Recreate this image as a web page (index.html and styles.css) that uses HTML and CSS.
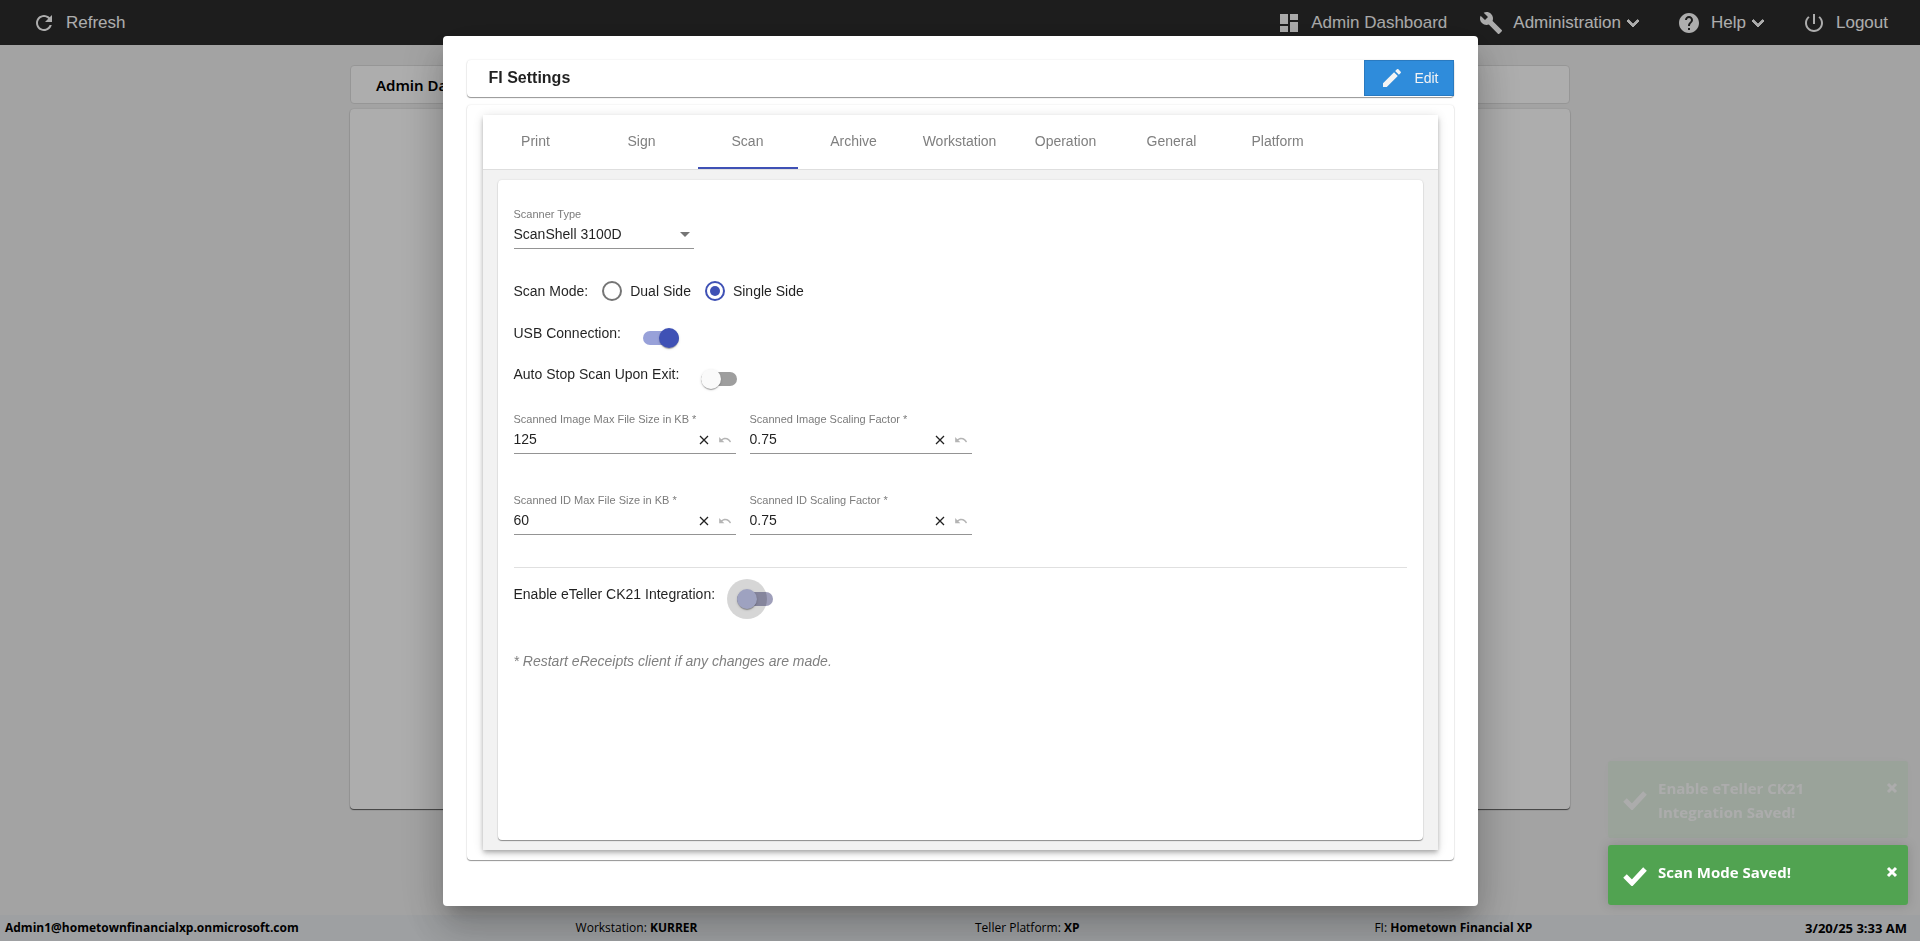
FILE: index.html
```html
<!DOCTYPE html>
<html lang="en">
<head>
    <meta charset="UTF-8">
    <meta name="viewport" content="width=device-width, initial-scale=1.0">
    <title>FI Settings</title>
    <link rel="stylesheet" href="styles.css">
</head>
<body>
    <header class="main-header">
        <a class="nav-link" href="#">
            <svg class="icon" viewBox="0 0 24 24"><path d="M17.65 6.35C16.2 4.9 14.21 4 12 4c-4.42 0-7.99 3.58-7.99 8s3.57 8 7.99 8c3.73 0 6.84-2.55 7.73-6h-2.08c-.82 2.33-3.04 4-5.65 4-3.31 0-6-2.69-6-6s2.69-6 6-6c1.66 0 3.14.69 4.22 1.78L13 11h7V4l-2.35 2.35z"/></svg>
            Refresh
        </a>
        <nav class="nav">
            <a class="nav-link" href="#">
                <svg class="icon" viewBox="0 0 24 24"><path d="M3 13h8V3H3v10zm0 8h8v-6H3v6zm10 0h8V11h-8v10zm0-18v6h8V3h-8z"/></svg>
                Admin Dashboard
            </a>
            <button class="nav-link" type="button">
                <svg class="icon" viewBox="0 0 24 24"><path d="M22.7 19l-9.1-9.1c.9-2.3.4-5-1.5-6.9-2-2-5-2.4-7.4-1.3L9 6 6 9 1.6 4.7C.4 7.1.9 10.1 2.9 12.1c1.9 1.9 4.6 2.4 6.9 1.5l9.1 9.1c.4.4 1 .4 1.4 0l2.3-2.3c.5-.4.5-1.1.1-1.4z"/></svg>
                <span class="with-arrow">Administration<svg class="icon" viewBox="0 0 24 24"><path d="M16.59 8.59L12 13.17 7.41 8.59 6 10l6 6 6-6z"/></svg></span>
            </button>
            <button class="nav-link" type="button">
                <svg class="icon" viewBox="0 0 24 24"><path d="M12 2C6.48 2 2 6.48 2 12s4.48 10 10 10 10-4.48 10-10S17.52 2 12 2zm1 17h-2v-2h2v2zm2.07-7.75l-.9.92C13.45 12.9 13 13.5 13 15h-2v-.5c0-1.1.45-2.1 1.17-2.83l1.24-1.26c.37-.36.59-.86.59-1.41 0-1.1-.9-2-2-2s-2 .9-2 2H8c0-2.21 1.79-4 4-4s4 1.79 4 4c0 .88-.36 1.68-.93 2.25z"/></svg>
                <span class="with-arrow">Help<svg class="icon" viewBox="0 0 24 24"><path d="M16.59 8.59L12 13.17 7.41 8.59 6 10l6 6 6-6z"/></svg></span>
            </button>
            <a class="nav-link" href="#">
                <svg class="icon" viewBox="0 0 24 24"><path d="M13 3h-2v10h2V3zm4.83 2.17l-1.42 1.42C17.99 7.86 19 9.81 19 12c0 3.87-3.13 7-7 7s-7-3.13-7-7c0-2.19 1.01-4.14 2.58-5.42L6.17 5.17C4.23 6.82 3 9.26 3 12c0 4.97 4.03 9 9 9s9-4.03 9-9c0-2.74-1.23-5.18-3.17-6.83z"/></svg>
                Logout
            </a>
        </nav>
    </header>

    <main class="page">
        <h1 class="page-title">Admin Dashboard</h1>
        <div class="page-card"></div>
    </main>

    <footer class="status-bar">
        <b>Admin1@hometownfinancialxp.onmicrosoft.com</b>
        <span>Workstation: <b>KURRER</b></span>
        <span>Teller Platform: <b>XP</b></span>
        <span>FI: <b>Hometown Financial XP</b></span>
        <b class="clock">3/20/25 3:33 AM</b>
    </footer>

    <!-- Settings dialog -->
    <div class="overlay">
        <section class="dialog" role="dialog" aria-labelledby="dialog-title">
            <div class="dialog-header">
                <h2 id="dialog-title">FI Settings</h2>
                <button class="edit-button" type="button">
                    <svg class="icon" viewBox="0 0 24 24"><path d="M3 17.25V21h3.75L17.81 9.94l-3.75-3.75L3 17.25zM20.71 7.04c.39-.39.39-1.02 0-1.41l-2.34-2.34c-.39-.39-1.02-.39-1.41 0l-1.83 1.83 3.75 3.75 1.83-1.83z"/></svg>
                    Edit
                </button>
            </div>

            <div class="dialog-body">
                <div class="tab-card">
                    <div class="tabs" role="tablist">
                        <button class="tab" type="button" role="tab">Print</button>
                        <button class="tab" type="button" role="tab">Sign</button>
                        <button class="tab active" type="button" role="tab" aria-selected="true">Scan</button>
                        <button class="tab" type="button" role="tab">Archive</button>
                        <button class="tab" type="button" role="tab">Workstation</button>
                        <button class="tab" type="button" role="tab">Operation</button>
                        <button class="tab" type="button" role="tab">General</button>
                        <button class="tab" type="button" role="tab">Platform</button>
                    </div>

                    <form class="panel">
                        <div class="field field-select">
                            <label for="scanner-type">Scanner Type</label>
                            <div class="control">
                                <select id="scanner-type">
                                    <option>ScanShell 3100D</option>
                                </select>
                            </div>
                        </div>

                        <div class="radio-row" role="radiogroup" aria-labelledby="scan-mode">
                            <span id="scan-mode">Scan Mode:</span>
                            <label><input type="radio" name="mode"> Dual Side</label>
                            <label><input type="radio" name="mode" checked> Single Side</label>
                        </div>

                        <div class="toggle-row usb">
                            <label for="usb">USB Connection:</label>
                            <input class="toggle" id="usb" type="checkbox" checked>
                        </div>
                        <div class="toggle-row">
                            <label for="auto-stop">Auto Stop Scan Upon Exit:</label>
                            <input class="toggle" id="auto-stop" type="checkbox">
                        </div>

                        <div class="fields">
                            <div class="field">
                                <label for="image-size">Scanned Image Max File Size in KB *</label>
                                <div class="control">
                                    <input id="image-size" type="text" value="125">
                                    <button type="button" aria-label="Clear"><svg class="clear" viewBox="0 0 16 16"><path d="M4 4l8 8M12 4l-8 8"/></svg></button>
                                    <button type="button" aria-label="Undo"><svg class="undo" viewBox="0 0 24 24"><path d="M12.5 8c-2.65 0-5.05.99-6.9 2.6L2 7v9h9l-3.62-3.62c1.39-1.16 3.16-1.88 5.12-1.88 3.54 0 6.55 2.31 7.6 5.5l2.37-.78C21.08 11.03 17.15 8 12.5 8z"/></svg></button>
                                </div>
                            </div>
                            <div class="field">
                                <label for="image-scale">Scanned Image Scaling Factor *</label>
                                <div class="control">
                                    <input id="image-scale" type="text" value="0.75">
                                    <button type="button" aria-label="Clear"><svg class="clear" viewBox="0 0 16 16"><path d="M4 4l8 8M12 4l-8 8"/></svg></button>
                                    <button type="button" aria-label="Undo"><svg class="undo" viewBox="0 0 24 24"><path d="M12.5 8c-2.65 0-5.05.99-6.9 2.6L2 7v9h9l-3.62-3.62c1.39-1.16 3.16-1.88 5.12-1.88 3.54 0 6.55 2.31 7.6 5.5l2.37-.78C21.08 11.03 17.15 8 12.5 8z"/></svg></button>
                                </div>
                            </div>
                            <div class="field">
                                <label for="id-size">Scanned ID Max File Size in KB *</label>
                                <div class="control">
                                    <input id="id-size" type="text" value="60">
                                    <button type="button" aria-label="Clear"><svg class="clear" viewBox="0 0 16 16"><path d="M4 4l8 8M12 4l-8 8"/></svg></button>
                                    <button type="button" aria-label="Undo"><svg class="undo" viewBox="0 0 24 24"><path d="M12.5 8c-2.65 0-5.05.99-6.9 2.6L2 7v9h9l-3.62-3.62c1.39-1.16 3.16-1.88 5.12-1.88 3.54 0 6.55 2.31 7.6 5.5l2.37-.78C21.08 11.03 17.15 8 12.5 8z"/></svg></button>
                                </div>
                            </div>
                            <div class="field">
                                <label for="id-scale">Scanned ID Scaling Factor *</label>
                                <div class="control">
                                    <input id="id-scale" type="text" value="0.75">
                                    <button type="button" aria-label="Clear"><svg class="clear" viewBox="0 0 16 16"><path d="M4 4l8 8M12 4l-8 8"/></svg></button>
                                    <button type="button" aria-label="Undo"><svg class="undo" viewBox="0 0 24 24"><path d="M12.5 8c-2.65 0-5.05.99-6.9 2.6L2 7v9h9l-3.62-3.62c1.39-1.16 3.16-1.88 5.12-1.88 3.54 0 6.55 2.31 7.6 5.5l2.37-.78C21.08 11.03 17.15 8 12.5 8z"/></svg></button>
                                </div>
                            </div>
                        </div>

                        <hr>

                        <div class="toggle-row">
                            <label for="ck21">Enable eTeller CK21 Integration:</label>
                            <input class="toggle pressed" id="ck21" type="checkbox">
                        </div>

                        <p class="note">* Restart eReceipts client if any changes are made.</p>
                    </form>
                </div>
            </div>
        </section>
    </div>

    <!-- Notifications -->
    <div class="toasts">
        <div class="toast fading">
            <svg class="check" viewBox="0 0 24 20"><path d="M2 10l7 7L22 3" /></svg>
            <p>Enable eTeller CK21 Integration Saved!</p>
            <button type="button" aria-label="Close"><svg viewBox="0 0 12 12"><path d="M2 2l8 8M10 2l-8 8"/></svg></button>
        </div>
        <div class="toast">
            <svg class="check" viewBox="0 0 24 20"><path d="M2 10l7 7L22 3" /></svg>
            <p>Scan Mode Saved!</p>
            <button type="button" aria-label="Close"><svg viewBox="0 0 12 12"><path d="M2 2l8 8M10 2l-8 8"/></svg></button>
        </div>
    </div>
</body>
</html>
```

FILE: styles.css
```css
* {
    box-sizing: border-box;
    margin: 0;
    padding: 0;
}

body {
    display: flex;
    flex-direction: column;
    min-height: 100vh;
    background: #f1f1f1;
    color: rgba(0, 0, 0, 0.87);
    font-family: Arial, "Liberation Sans", sans-serif;
    font-size: 14px;
    line-height: 20px;
}

button {
    border: none;
    background: none;
    color: inherit;
    font: inherit;
    cursor: pointer;
}

a {
    color: inherit;
    text-decoration: none;
}

.icon {
    width: 24px;
    height: 24px;
    fill: currentColor;
}

/* Top navigation */
.main-header {
    display: flex;
    justify-content: space-between;
    height: 45px;
    padding: 0 32px;
    background: #2c2c2c;
    color: #fff;
    font-size: 17px;
}

.nav {
    display: flex;
    gap: 32px;
}

.nav-link {
    display: flex;
    align-items: center;
    gap: 10px;
}

.with-arrow {
    display: flex;
    align-items: center;
}

.with-arrow .icon {
    stroke: currentColor;
    stroke-width: 1;
}

/* Page behind the dialog */
.page {
    flex: 1;
    width: 90%;
    max-width: 1220px;
    margin: 0 auto;
    padding-top: 20px;
}

.page-title {
    height: 39px;
    padding: 0 25px;
    border: 1px solid #dedede;
    border-radius: 4px;
    background: #fff;
    color: #000;
    font-family: "Noto Sans", "Open Sans", sans-serif;
    font-size: 15px;
    font-weight: 600;
    line-height: 38px;
}

.page-card {
    height: calc(100vh - 241px);
    margin-top: 5px;
    border-radius: 4px;
    background: #fff;
    box-shadow: 0 1px 1px rgba(0, 0, 0, 0.6), 0 0 2px rgba(0, 0, 0, 0.15);
}

.status-bar {
    display: grid;
    grid-template-columns: 30% 21% 21% 1fr auto;
    align-items: center;
    height: 26px;
    padding: 0 13px 0 5px;
    background: #e9ecef;
    color: #000;
    font-family: "Open Sans", "Noto Sans", sans-serif;
    font-size: 12px;
}

.status-bar .clock {
    font-size: 13px;
}

/* Dialog */
.overlay {
    display: flex;
    justify-content: center;
    align-items: center;
    position: fixed;
    inset: 0;
    padding-top: 1px;
    background: rgba(0, 0, 0, 0.32);
}

.dialog {
    display: flex;
    flex-direction: column;
    gap: 8px;
    width: 90%;
    max-width: 1035px;
    height: calc(100vh - 71px);
    padding: 24px 24px 46px;
    border-radius: 4px;
    background: #fff;
    box-shadow: 0 11px 15px -7px rgba(0, 0, 0, 0.2), 0 24px 38px 3px rgba(0, 0, 0, 0.14), 0 9px 46px 8px rgba(0, 0, 0, 0.12);
}

.dialog-header,
.dialog-body,
.panel {
    border-radius: 4px;
    background: #fff;
    box-shadow: 0 1px 1px rgba(0, 0, 0, 0.4), 0 0 2px rgba(0, 0, 0, 0.12);
}

.dialog-header {
    display: flex;
    justify-content: space-between;
    height: 37px;
    padding-left: 22px;
}

.dialog-header h2 {
    font-size: 16px;
    line-height: 36px;
}

.edit-button {
    display: flex;
    align-items: center;
    gap: 10px;
    height: 36px;
    padding: 0 14px 0 15px;
    border: 1px solid #2a7ac0;
    background: #2f8cdb;
    color: #f4f4f4;
}

.dialog-body {
    display: flex;
    flex: 1;
    padding: 10px 16px;
}

.tab-card {
    display: flex;
    flex-direction: column;
    flex: 1;
    background: #f2f2f2;
    box-shadow: 0 2px 4px -1px rgba(0, 0, 0, 0.2), 0 4px 5px rgba(0, 0, 0, 0.14), 0 1px 10px rgba(0, 0, 0, 0.12);
}

.tabs {
    display: flex;
    gap: 6px;
    height: 55px;
    padding: 0 3px;
    border-bottom: 1px solid #dedede;
    background: #fff;
}

.tab {
    width: 100px;
    border-bottom: 2px solid transparent;
    color: #7f7f7f;
}

.tab.active {
    border-bottom-color: #3f51b5;
}

/* Scan settings */
.panel {
    flex: 1;
    margin: 10px 15px;
    padding: 27px 16px 16px;
}

.field label {
    display: block;
    color: #7b7b7b;
    font-size: 11px;
    line-height: 14px;
}

.control {
    display: flex;
    align-items: center;
    position: relative;
    height: 28px;
    border-bottom: 1px solid #949494;
}

.control input,
.control select {
    flex: 1;
    min-width: 0;
    height: 27px;
    padding-bottom: 2px;
    border: none;
    outline: none;
    appearance: none;
    background: none;
    color: inherit;
    font: inherit;
}

.control button {
    display: flex;
    margin-right: 4px;
}

.clear {
    width: 16px;
    height: 16px;
    margin-right: 2px;
    stroke: currentColor;
    stroke-width: 1.3;
}

.undo {
    width: 14px;
    height: 14px;
    fill: #b4b4b4;
}

.field-select {
    width: 180px;
}

.field-select .control::after {
    content: "";
    position: absolute;
    right: 4px;
    border: 5px solid transparent;
    border-top-color: #757575;
    border-bottom: none;
    pointer-events: none;
}

.fields {
    display: grid;
    grid-template-columns: 222px 222px;
    gap: 39px 14px;
    margin: 23px 0 32px;
}

.radio-row {
    display: flex;
    align-items: center;
    gap: 14px;
    margin-top: 32px;
}

.radio-row label {
    display: flex;
    align-items: center;
    gap: 8px;
}

.radio-row input {
    display: grid;
    place-items: center;
    width: 20px;
    height: 20px;
    border: 2px solid #757575;
    border-radius: 50%;
    appearance: none;
}

.radio-row input:checked {
    border-color: #3f51b5;
}

.radio-row input:checked::before {
    content: "";
    width: 10px;
    height: 10px;
    border-radius: 50%;
    background: #3f51b5;
}

.toggle-row {
    display: flex;
    gap: 22px;
    margin-top: 16px;
}

.toggle-row.usb {
    margin-top: 22px;
}

.toggle {
    position: relative;
    width: 36px;
    height: 14px;
    margin: 8px 0 3px;
    border-radius: 7px;
    appearance: none;
    background: #9e9e9e;
}

.toggle::before {
    content: "";
    position: absolute;
    top: -3px;
    left: 0;
    z-index: 1;
    width: 20px;
    height: 20px;
    border-radius: 50%;
    background: #fafafa;
    box-shadow: 0 2px 1px -1px rgba(0, 0, 0, 0.2), 0 1px 1px rgba(0, 0, 0, 0.14), 0 1px 3px rgba(0, 0, 0, 0.12);
}

.toggle:checked {
    background: #98a1d9;
}

.toggle:checked::before {
    left: 16px;
    background: #3f51b5;
}

.toggle.pressed {
    background: #9f9fba;
}

.toggle.pressed::before {
    background: #9ea2c0;
}

/* Ripple around the thumb */
.toggle.pressed::after {
    content: "";
    position: absolute;
    top: -13px;
    left: -10px;
    width: 40px;
    height: 40px;
    border-radius: 50%;
    background: rgba(0, 0, 0, 0.16);
}

hr {
    height: 1px;
    border: none;
    background: #e0e0e0;
}

.note {
    margin-top: 42px;
    color: #808080;
    font-style: italic;
}

/* Toasts */
.toasts {
    position: fixed;
    right: 12px;
    bottom: 36px;
    width: 300px;
}

.toast {
    display: flex;
    align-items: center;
    gap: 11px;
    min-height: 60px;
    margin-top: 7px;
    padding: 15px 10px 14px 15px;
    border-radius: 3px;
    background: #51a351;
    box-shadow: 0 0 12px rgba(0, 0, 0, 0.15);
    color: #fff;
    font-family: "Open Sans", "Noto Sans", sans-serif;
    font-size: 15px;
    font-weight: bold;
    line-height: 24px;
}

.toast.fading {
    opacity: 0.1;
}

.toast p {
    flex: 1;
    align-self: flex-start;
    padding-right: 40px;
}

.toast .check {
    width: 24px;
    height: 20px;
    fill: none;
    stroke: currentColor;
    stroke-width: 5;
}

.toast button {
    align-self: flex-start;
    padding-top: 6px;
    line-height: 0;
}

.toast button svg {
    width: 12px;
    height: 12px;
    stroke: currentColor;
    stroke-width: 3;
}
```
